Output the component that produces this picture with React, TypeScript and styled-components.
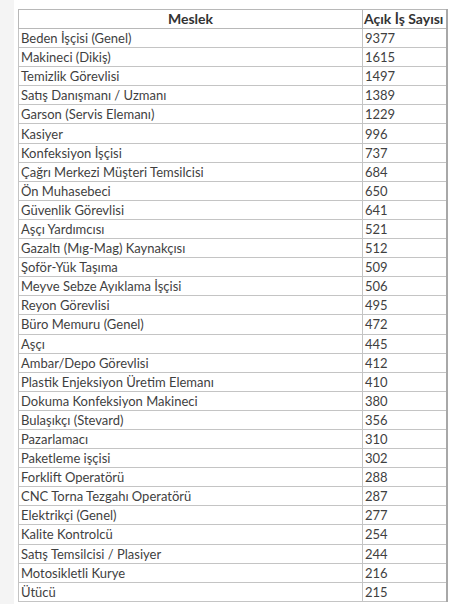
import styled, { createGlobalStyle } from "styled-components";

const GlobalStyle = createGlobalStyle`
  html, body {
    margin: 0;
    padding: 0;
    background: #fff;
  }
  body {
    font-family: "Lato", "Liberation Sans", sans-serif;
    color: #3f3f3f;
  }
`;

const Page = styled.div`
  display: flex;
  min-height: 604px;
`;

const Gutter = styled.div`
  width: 14px;
  flex: none;
  background: #f4f4f4;
`;

const Content = styled.div`
  flex: 1;
  padding: 9px 2px 0 4px;
`;

const Table = styled.table`
  width: 430px;
  border-collapse: collapse;
  font-size: 13px;
  border-right: 2px solid #a8a8a8;
`;

const HeadCell = styled.th<{ center?: boolean }>`
  font-size: 14px;
  font-weight: 700;
  color: #333;
  text-align: ${({ center }) => (center ? "center" : "left")};
  border: 1px solid #b8b8b8;
  height: 18px;
  padding: 0 1px;
  line-height: 18px;
  white-space: nowrap;
`;

const Cell = styled.td<{ narrow?: boolean }>`
  border: 1px solid #c4c4c4;
  height: 18.1px;
  padding: 0 2px;
  line-height: 18px;
  width: ${({ narrow }) => (narrow ? "79px" : "auto")};
  white-space: nowrap;
`;

const rows: [string, number][] = [
  ["Beden İşçisi (Genel)", 9377],
  ["Makineci (Dikiş)", 1615],
  ["Temizlik Görevlisi", 1497],
  ["Satış Danışmanı / Uzmanı", 1389],
  ["Garson (Servis Elemanı)", 1229],
  ["Kasiyer", 996],
  ["Konfeksiyon İşçisi", 737],
  ["Çağrı Merkezi Müşteri Temsilcisi", 684],
  ["Ön Muhasebeci", 650],
  ["Güvenlik Görevlisi", 641],
  ["Aşçı Yardımcısı", 521],
  ["Gazaltı (Mıg-Mag) Kaynakçısı", 512],
  ["Şoför-Yük Taşıma", 509],
  ["Meyve Sebze Ayıklama İşçisi", 506],
  ["Reyon Görevlisi", 495],
  ["Büro Memuru (Genel)", 472],
  ["Aşçı", 445],
  ["Ambar/Depo Görevlisi", 412],
  ["Plastik Enjeksiyon Üretim Elemanı", 410],
  ["Dokuma Konfeksiyon Makineci", 380],
  ["Bulaşıkçı (Stevard)", 356],
  ["Pazarlamacı", 310],
  ["Paketleme işçisi", 302],
  ["Forklift Operatörü", 288],
  ["CNC Torna Tezgahı Operatörü", 287],
  ["Elektrikçi (Genel)", 277],
  ["Kalite Kontrolcü", 254],
  ["Satış Temsilcisi / Plasiyer", 244],
  ["Motosikletli Kurye", 216],
  ["Ütücü", 215],
];

function App() {
  return (
    <>
      <GlobalStyle />
      <Page>
        <Gutter />
        <Content>
          <Table>
            <thead>
              <tr>
                <HeadCell center>Meslek</HeadCell>
                <HeadCell>Açık İş Sayısı</HeadCell>
              </tr>
            </thead>
            <tbody>
              {rows.map(([job, count]) => (
                <tr key={job}>
                  <Cell>{job}</Cell>
                  <Cell narrow>{count}</Cell>
                </tr>
              ))}
            </tbody>
          </Table>
        </Content>
      </Page>
    </>
  );
}

export default App;
